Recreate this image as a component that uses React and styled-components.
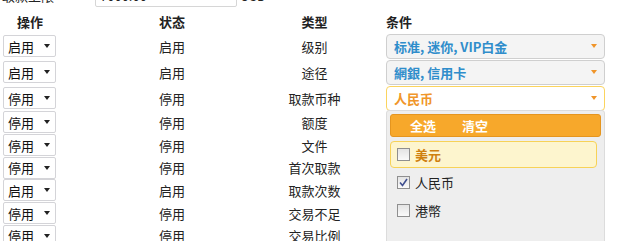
import styled, { createGlobalStyle } from "styled-components";

const GlobalStyle = createGlobalStyle`
  body {
    margin: 0;
    background: #fff;
    font-family: "Noto Sans CJK SC", "Liberation Sans", sans-serif;
    font-size: 13px;
    color: #222;
    overflow: hidden;
  }
`;

const Page = styled.div`
  margin-top: -16px;
  position: relative;
`;

const LimitRow = styled.div`
  display: flex;
  align-items: center;
  height: 23px;
`;

const LimitLabel = styled.span`
  width: 93px;
  padding-left: 2px;
`;

const LimitInput = styled.div`
  width: 136px;
  height: 21px;
  border: 1px solid #d6d6d6;
  border-radius: 2px;
  padding-left: 4px;
  line-height: 21px;
`;

const Unit = styled.span`
  margin-left: 3px;
`;

const Grid = styled.div`
  display: grid;
  grid-template-columns: 60px 224px 61px 1fr;
  margin-top: 4px;
`;

const Head = styled.div`
  font-weight: bold;
  height: 22px;
  line-height: 22px;
  text-align: ${(p) => p.$align || "center"};
  padding-left: ${(p) => (p.$align === "left" ? "41px" : "0")};
`;

const Cell = styled.div`
  display: flex;
  align-items: center;
  justify-content: center;
  height: ${(p) => (p.$tall ? "26px" : "22.7px")};
`;

const CondCell = styled.div`
  display: flex;
  align-items: center;
  padding-left: 41px;
  height: ${(p) => (p.$tall ? "26px" : "22.7px")};
  position: relative;
`;

const Select = styled.div`
  box-sizing: border-box;
  width: 53px;
  height: 22px;
  margin-left: 3px;
  margin-right: auto;
  border: 1px solid #d4d4d8;
  border-radius: 2px;
  display: flex;
  align-items: center;
  justify-content: space-between;
  padding: 0 5px 0 4px;
  background: #fff;
  color: #111;
`;

const Caret = styled.span`
  width: 0;
  height: 0;
  border-left: 3.5px solid transparent;
  border-right: 3.5px solid transparent;
  border-top: 4px solid ${(p) => p.$color || "#222"};
`;

const CondBox = styled.div`
  box-sizing: border-box;
  width: 219px;
  height: 25px;
  border: 1px solid ${(p) => (p.$open ? "#fbd45e" : "#cfcfcf")};
  background: ${(p) => (p.$open ? "#fff" : "#f4f4f4")};
  border-radius: 4px;
  display: flex;
  align-items: center;
  justify-content: space-between;
  padding: 0 7px 0 7px;
  font-weight: bold;
  color: ${(p) => (p.$open ? "#f0962a" : "#2f8dcb")};
`;

const Panel = styled.div`
  position: absolute;
  top: 25px;
  left: 41px;
  width: 219px;
  height: 160px;
  box-sizing: border-box;
  background: #eeeeee;
  border: 1px solid #dcdcdc;
  border-radius: 3px;
  padding: 3px 3px 0 3px;
  z-index: 5;
`;

const ActionBar = styled.div`
  height: 23px;
  box-sizing: border-box;
  background: #f7a82b;
  border: 1px solid #e5951f;
  border-radius: 3px;
  display: flex;
  align-items: center;
  padding-left: 19px;
  gap: 26px;
  color: #fff;
  font-weight: bold;
  margin-bottom: 4px;
`;

const Option = styled.div`
  box-sizing: border-box;
  height: 27px;
  margin: 0 4px 1px 0;
  display: flex;
  align-items: center;
  gap: 5px;
  padding-left: 6px;
  border-radius: 4px;
  border: 1px solid ${(p) => (p.$hover ? "#f7d257" : "transparent")};
  background: ${(p) => (p.$hover ? "#fdf5ce" : "transparent")};
  color: ${(p) => (p.$hover ? "#cf800f" : "#222")};
  font-weight: ${(p) => (p.$hover ? "bold" : "normal")};
`;

const Box = styled.span`
  box-sizing: border-box;
  width: 13px;
  height: 13px;
  border: 1px solid #8f8f8f;
  background: linear-gradient(#e4e4e4, #fafafa);
  display: flex;
  align-items: center;
  justify-content: center;
`;

const Checkbox = ({ checked }) => (
  <Box>
    {checked && (
      <svg width="9" height="9" viewBox="0 0 9 9">
        <path d="M1 4.5 L3.5 7.5 L8 1" fill="none" stroke="#3f4f8f" strokeWidth="1.6" />
      </svg>
    )}
  </Box>
);

const rows = [
  { op: "启用", state: "启用", type: "级别", cond: "标准, 迷你, VIP白金" },
  { op: "启用", state: "启用", type: "途径", cond: "網銀, 信用卡" },
  { op: "停用", state: "停用", type: "取款币种", cond: "人民币", open: true },
  { op: "停用", state: "停用", type: "额度" },
  { op: "停用", state: "停用", type: "文件" },
  { op: "停用", state: "停用", type: "首次取款" },
  { op: "启用", state: "启用", type: "取款次数" },
  { op: "停用", state: "停用", type: "交易不足" },
  { op: "停用", state: "停用", type: "交易比例" },
];

const currencies = [
  { name: "美元", hover: true },
  { name: "人民币", checked: true },
  { name: "港幣" },
];

export default function App() {
  return (
    <Page>
      <GlobalStyle />
      <LimitRow>
        <LimitLabel>取款上限</LimitLabel>
        <LimitInput>7000.00</LimitInput>
        <Unit>USD</Unit>
      </LimitRow>
      <Grid>
        <Head>操作</Head>
        <Head>状态</Head>
        <Head>类型</Head>
        <Head $align="left">条件</Head>
        {rows.map((r, i) => {
          const tall = !!r.cond;
          return [
            <Cell key={`a${i}`} $tall={tall}>
              <Select>
                {r.op}
                <Caret />
              </Select>
            </Cell>,
            <Cell key={`b${i}`} $tall={tall}>{r.state}</Cell>,
            <Cell key={`c${i}`} $tall={tall}>{r.type}</Cell>,
            <CondCell key={`d${i}`} $tall={tall}>
              {r.cond && (
                <CondBox $open={r.open}>
                  {r.cond}
                  <Caret $color="#f0952a" />
                </CondBox>
              )}
              {r.open && (
                <Panel>
                  <ActionBar>
                    <span>全选</span>
                    <span>清空</span>
                  </ActionBar>
                  {currencies.map((c) => (
                    <Option key={c.name} $hover={c.hover}>
                      <Checkbox checked={c.checked} />
                      {c.name}
                    </Option>
                  ))}
                </Panel>
              )}
            </CondCell>,
          ];
        })}
      </Grid>
    </Page>
  );
}
